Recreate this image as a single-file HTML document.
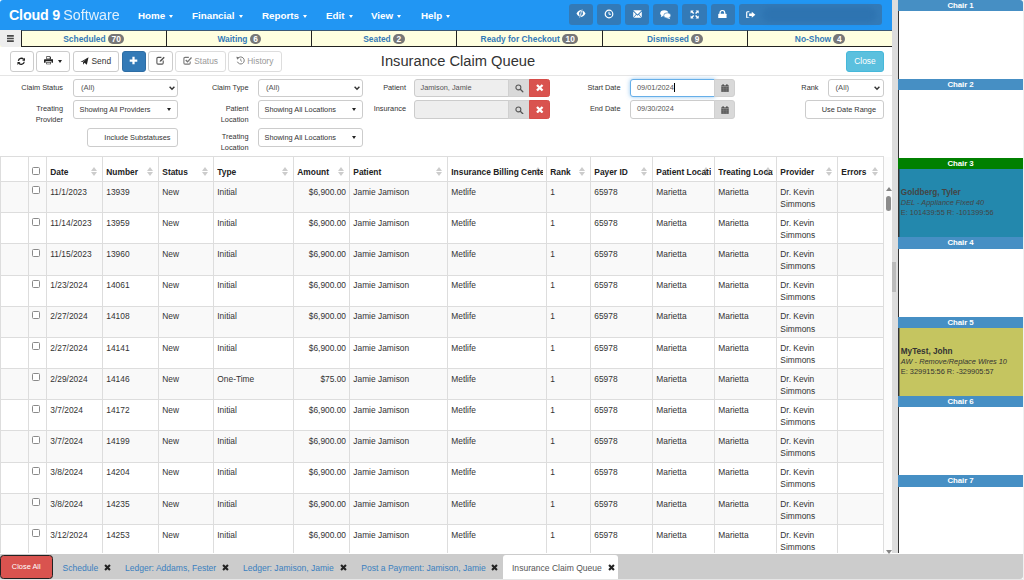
<!DOCTYPE html>
<html lang="en">
<head>
<meta charset="utf-8">
<title>Insurance Claim Queue</title>
<style>
*{box-sizing:border-box;}
html,body{margin:0;padding:0;}
body{width:1024px;height:580px;overflow:hidden;position:relative;background:#fff;font-family:"Liberation Sans",sans-serif;font-size:8.4px;color:#333;}
.abs{position:absolute;}
/* navbar */
#nav{position:absolute;left:0;top:0;width:892px;height:30px;background:#2196f3;border-top-left-radius:3px;}
#brand{position:absolute;left:9px;top:6.8px;font-size:14.3px;color:#fff;white-space:nowrap;letter-spacing:-0.2px;}
#brand b{font-weight:bold;}
#brand span{font-weight:normal;opacity:.86;letter-spacing:0px;margin-left:-0.5px;}
.menu{position:absolute;top:10.3px;font-size:9.8px;font-weight:bold;color:#fff;white-space:nowrap;}
.caret{display:inline-block;width:0;height:0;border-left:2.8px solid transparent;border-right:2.8px solid transparent;border-top:3.2px solid currentColor;vertical-align:middle;margin-left:1.5px;}
.nbtn{position:absolute;top:4px;height:21px;width:24.3px;background:#337ab7;border-radius:3px;}
/* status bar */
#sbar{position:absolute;left:0;top:30px;width:892px;height:17px;background:#ffffe0;}
.scell{position:absolute;top:0;height:17px;border-left:1px solid #222;border-bottom:1px solid #222;border-top:1px solid #3b5875;text-align:center;font-size:8.4px;font-weight:bold;color:#337ab7;line-height:16.5px;white-space:nowrap;}
.badge{display:inline-block;background:#777;color:#fff;border-radius:6px;font-size:8.4px;line-height:10px;padding:0 3.5px;height:10px;vertical-align:0.5px;font-weight:bold;}
#ham{position:absolute;left:0;top:0;width:20.6px;height:16.6px;background:#eee;border-radius:0 0 3px 3px;}
/* toolbar */
.btn{position:absolute;top:51px;height:21px;border:1px solid #ccc;border-radius:3px;background:#fff;color:#333;font-size:8.4px;line-height:19px;text-align:center;white-space:nowrap;}
.btn.dis{color:#999;border-color:#ddd;}
#title{position:absolute;left:0;width:916px;top:52px;text-align:center;font-size:14.7px;color:#333;line-height:18.6px;white-space:nowrap;}
#hr1{position:absolute;left:0;top:75px;width:892px;height:1px;background:#e5e5e5;}
/* filters */
.lbl{position:absolute;text-align:right;font-size:7.35px;line-height:11.6px;color:#333;white-space:nowrap;}
.sel{position:absolute;height:17.5px;border:1px solid #ccc;border-radius:3px;background:#fff;font-size:7.7px;line-height:15.5px;color:#555;padding-left:7px;white-space:nowrap;}
.dd{position:absolute;height:18.6px;border:1px solid #ccc;border-radius:3px;background:#fff;font-size:7.35px;line-height:17px;color:#333;padding-left:5.5px;white-space:nowrap;}
.inp{position:absolute;height:17.5px;border:1px solid #ccc;background:#eee;font-size:7.35px;line-height:15.5px;color:#555;padding-left:6px;white-space:nowrap;}
.addon{position:absolute;height:17.5px;background:#d9d9d9;border:1px solid #d0d0d0;}
.redb{position:absolute;height:17.5px;width:21px;background:#d9534f;border:1px solid #d64d49;border-radius:0 2.5px 2.5px 0;}
.ic{position:absolute;display:block;}
.chev{position:absolute;right:1.5px;top:4px;width:8px;height:8px;}
.dc{position:absolute;right:6.3px;top:7.2px;border-left-width:2.7px;border-right-width:2.7px;border-top-width:3.2px;margin:0;color:#222;}
/* table */
#tbl{position:absolute;left:0;top:156px;width:884px;height:397px;overflow:hidden;}
table{border-collapse:collapse;table-layout:fixed;width:883px;font-size:8.4px;}
td,th{border:1px solid #ddd;padding:0 0 0 3.3px;vertical-align:top;text-align:left;overflow:hidden;white-space:nowrap;}
th{height:25px;font-weight:bold;line-height:11px;padding-top:10px;border-bottom:1.6px solid #ddd;color:#222;position:relative;}
td{height:31.18px;line-height:12.1px;padding-top:3.8px;color:#333;}
th .t{overflow:hidden;margin-right:3px;position:relative;}
tr.odd td{background:#f9f9f9;}
td.wrap{white-space:normal;}
td.r{text-align:right;padding-right:3px;}
.cb{display:block;width:8px;height:8px;border:1px solid #8a8a8a;border-radius:1.5px;background:#fff;margin-top:0.6px;margin-left:-0.8px;}
th .cb{margin-top:-0.5px;}
.sort{position:absolute;right:5.2px;top:10.3px;width:6px;height:10px;}
.sort:before{content:"";position:absolute;left:0;top:0;border-left:3px solid transparent;border-right:3px solid transparent;border-bottom:4.3px solid #ccc;}
.sort:after{content:"";position:absolute;left:0;top:5.2px;border-left:3px solid transparent;border-right:3px solid transparent;border-top:4.3px solid #ccc;}
/* bottom tabs */
#tabs{position:absolute;left:0;top:554px;width:1023px;height:24.7px;background:#ccc;border-bottom-right-radius:3px;}
#botstrip{position:absolute;left:0;top:578.7px;width:1024px;height:1.3px;background:#e6e6e6;}
#rstrip{position:absolute;left:1023px;top:0;width:1px;height:580px;background:#f0f0f0;}
.tab{position:absolute;top:2.5px;height:22px;font-size:8.55px;line-height:22px;color:#3a80bf;white-space:nowrap;}
.tx{position:absolute;top:9.700px;width:7px;height:7px;}
#closeall{position:absolute;left:0;top:1px;width:52.5px;height:23.5px;background:#d9534f;border:1px solid #222;border-radius:3.500px;color:#fff;font-size:7.400px;line-height:21px;text-align:center;}
#acttab{position:absolute;left:502.5px;top:1px;width:115px;height:23.700px;background:#fff;border-radius:3px 3px 0 0;}
/* right panel */
#rp{position:absolute;left:892px;top:0;width:132px;height:553px;background:#fff;border-left:6px solid #ddd;}
#rpi{position:absolute;left:0;top:0;width:126px;height:553px;border-left:1px solid #333;background:#fff;}
.ch{position:absolute;left:-1px;width:125px;height:11.3px;background:#468fc4;color:#fff;font-weight:bold;font-size:7.9px;letter-spacing:-0.1px;line-height:11.3px;text-align:center;}
.cbody{position:absolute;left:-1px;width:125px;border-left:1px solid #333;box-shadow:inset 1px 0 0 rgba(51,51,51,.45);font-size:7.4px;line-height:10.5px;padding-left:1.8px;white-space:nowrap;}
.cbody b{font-size:8.2px;position:relative;top:0.6px;}
</style>
</head>
<body>

<div id="nav">
  <div id="brand"><b>Cloud 9</b> <span>Software</span></div>
  <div class="menu" style="left:138px">Home <span class="caret"></span></div>
  <div class="menu" style="left:192px">Financial <span class="caret"></span></div>
  <div class="menu" style="left:262px">Reports <span class="caret"></span></div>
  <div class="menu" style="left:326px">Edit <span class="caret"></span></div>
  <div class="menu" style="left:371px">View <span class="caret"></span></div>
  <div class="menu" style="left:421px">Help <span class="caret"></span></div>
  <div class="nbtn" style="left:569px"><svg class="ic" style="left:7px;top:5.2px;width:10px;height:9px" viewBox="0 0 20 18"><path d="M1 9 C4 3.5 8 2 10 2 C12 2 16 3.5 19 9 C16 14.5 12 16 10 16 C8 16 4 14.5 1 9 Z" fill="#fff"/><circle cx="10" cy="9" r="4" fill="#337ab7"/><circle cx="10" cy="9" r="1.8" fill="#fff"/><path d="M12.5 0.5 L7.5 17.5" stroke="#337ab7" stroke-width="3.4"/><path d="M12.2 1 L7.4 17.2" stroke="#fff" stroke-width="1.5"/></svg></div>
  <div class="nbtn" style="left:597px"><svg class="ic" style="left:6.6px;top:4.6px;width:10px;height:10px" viewBox="0 0 20 20"><circle cx="10" cy="10" r="7.6" fill="none" stroke="#fff" stroke-width="2.4"/><path d="M10 5.5 V10.5 H14" fill="none" stroke="#fff" stroke-width="2"/></svg></div>
  <div class="nbtn" style="left:625px"><svg class="ic" style="left:7.7px;top:5.8px;width:9px;height:8px" viewBox="0 0 20 16" preserveAspectRatio="none"><path d="M0.5 0.5 H19.5 L10 9 Z" fill="#fff"/><path d="M0.5 3 L6.5 8.3 L0.5 15 Z M19.5 3 L13.5 8.3 L19.5 15 Z" fill="#fff"/><path d="M1.5 15.5 L7.7 9.4 L10 11.4 L12.3 9.4 L18.5 15.5 Z" fill="#fff"/></svg></div>
  <div class="nbtn" style="left:653px;width:25.3px"><svg class="ic" style="left:7px;top:6px;width:11px;height:9.5px" viewBox="0 0 22 19"><ellipse cx="8.5" cy="6.5" rx="8" ry="6" fill="#fff"/><path d="M3 10 L1.5 14.5 L7 11.5 Z" fill="#fff"/><ellipse cx="14.5" cy="11" rx="7" ry="5.4" fill="#fff" stroke="#337ab7" stroke-width="1.3"/><path d="M18 14.5 L20.5 18.5 L14 16 Z" fill="#fff"/></svg></div>
  <div class="nbtn" style="left:682px;width:25px"><svg class="ic" style="left:8px;top:5.5px;width:9.3px;height:9px" viewBox="0 0 20 20"><g fill="#fff"><path d="M1 1 H8 L5.6 3.4 L9 6.8 L6.8 9 L3.4 5.6 L1 8 Z"/><path d="M19 1 V8 L16.6 5.6 L13.2 9 L11 6.8 L14.4 3.4 L12 1 Z"/><path d="M1 19 V12 L3.4 14.4 L6.8 11 L9 13.2 L5.6 16.6 L8 19 Z"/><path d="M19 19 H12 L14.4 16.600 L11 13.2 L13.2 11 L16.6 14.4 L19 12 Z"/></g></svg></div>
  <div class="nbtn" style="left:710.6px;width:24.4px"><svg class="ic" style="left:7.8px;top:5.7px;width:8.8px;height:8.8px" preserveAspectRatio="none" viewBox="0 0 18 20"><path d="M4.2 9 V6 A4.8 4.8 0 0 1 13.800 6 V9" fill="none" stroke="#fff" stroke-width="2.6"/><rect x="0.500" y="8.5" width="17" height="11" rx="1" fill="#fff"/></svg></div>
  <div class="nbtn" style="left:738.8px;width:143.4px"><svg class="ic" style="left:7.2px;top:6.6px;width:9.6px;height:7.6px" preserveAspectRatio="none" viewBox="0 0 20 18"><path d="M7 1.5 H3.500 A2 2 0 0 0 1.500 3.500 V14.500 A2 2 0 0 0 3.500 16.500 H7" fill="none" stroke="#fff" stroke-width="2.4"/><path d="M6.500 6 H12 V2 L19.500 9 L12 16 V12 H6.500 Z" fill="#fff"/></svg><div style="position:absolute;left:24px;top:3px;width:113px;height:15px;background:#2e74b1;border-radius:7px;filter:blur(2px)"></div></div>
</div>

<div id="sbar">
  <div id="ham"><svg class="ic" style="left:6.900px;top:5px;width:6.800px;height:7px" viewBox="0 0 14 13.4" preserveAspectRatio="none"><path d="M0 1.700 H14 M0 6.700 H14 M0 11.700 H14" stroke="#484848" stroke-width="3"/></svg></div>
  <div class="scell" style="left:20.6px;width:145.4px">Scheduled <span class="badge">70</span></div>
  <div class="scell" style="left:166px;width:146px">Waiting <span class="badge">6</span></div>
  <div class="scell" style="left:311px;width:145px">Seated <span class="badge">2</span></div>
  <div class="scell" style="left:456px;width:146px">Ready for Checkout <span class="badge">10</span></div>
  <div class="scell" style="left:602px;width:145px">Dismissed <span class="badge">9</span></div>
  <div class="scell" style="left:747px;width:145px">No-Show <span class="badge">4</span></div>
</div>

<div class="btn" style="left:9.5px;width:24px"><svg class="ic" style="left:6.4px;top:4.5px;width:8.6px;height:8.6px" viewBox="0 0 20 20"><path d="M3.2 9 A7 7 0 0 1 15.5 5.500" fill="none" stroke="#222" stroke-width="3"/><path d="M19 1.500 V8.500 H12 Z" fill="#222"/><path d="M16.800 11 A7 7 0 0 1 4.500 14.500" fill="none" stroke="#222" stroke-width="3"/><path d="M1 18.500 V11.500 H8 Z" fill="#222"/></svg></div>
<div class="btn" style="left:36.3px;width:33.7px"><svg class="ic" style="left:6.8px;top:4.3px;width:9.2px;height:8.5px" viewBox="0 0 20 19" preserveAspectRatio="none"><path d="M5 0.500 H13 L15 2.500 V7 H5 Z" fill="#222"/><path d="M1.500 7 H18.500 A1.500 1.500 0 0 1 20 8.500 V15 H16.500 V12 H3.500 V15 H0 V8.500 A1.500 1.500 0 0 1 1.500 7 Z" fill="#222"/><path d="M5 13.500 H15 V18.500 H5 Z" fill="#222"/><path d="M6.200 2 H12.500 V5.800 H6.200 Z" fill="#fff"/><path d="M6.300 14.800 H13.700 V17.300 H6.300 Z" fill="#fff"/></svg><span class="caret" style="position:absolute;left:20.3px;top:7.9px;margin:0;color:#222"></span></div>
<div class="btn" style="left:73px;width:45.6px;text-align:left;padding-left:17.5px"><svg class="ic" style="left:5.8px;top:4.5px;width:9px;height:8.500px" viewBox="0 0 20 20"><path d="M0.500 11.500 L19.500 0.500 L15.500 18 L10 13.500 L7 18.500 L6.500 12 L15 4.500 L5 11.500 Z" fill="#222"/></svg>Send</div>
<div class="btn" style="left:121.6px;width:24.4px;background:#337ab7;border-color:#2e6da4;color:#fff;"><svg class="ic" style="left:6.500px;top:4.3px;width:9px;height:9px" viewBox="0 0 10 10"><path d="M5 0.800 V9.200 M0.800 5 H9.200" stroke="#fff" stroke-width="2.500"/></svg></div>
<div class="btn" style="left:148.4px;width:24.2px"><svg class="ic" style="left:6.6px;top:4.3px;width:9px;height:9px" viewBox="0 0 20 20"><path d="M12 3 H4.500 A2.500 2.500 0 0 0 2 5.500 V15.500 A2.500 2.500 0 0 0 4.500 18 H13.500 A2.500 2.500 0 0 0 16 15.500 V10" fill="none" stroke="#555" stroke-width="2.400"/><path d="M8 13 L8.800 9.800 L17 1.500 L19.500 4 L11.200 12.200 Z" fill="#555"/></svg></div>
<div class="btn dis" style="left:175.4px;width:50.400px;text-align:left;padding-left:17.900px"><svg class="ic" style="left:6.400px;top:4.400px;width:9px;height:9px" viewBox="0 0 20 20"><path d="M13 3 H4.500 A2.500 2.500 0 0 0 2 5.500 V15.500 A2.500 2.500 0 0 0 4.500 18 H13.500 A2.500 2.500 0 0 0 16 15.500 V12" fill="none" stroke="#777" stroke-width="2.400"/><path d="M6 9 L10 13 L19 3.500" fill="none" stroke="#777" stroke-width="3"/></svg>Status</div>
<div class="btn dis" style="left:228.400px;width:53.500px;text-align:left;padding-left:17.900px"><svg class="ic" style="left:6.5px;top:4.4px;width:9px;height:8.800px" viewBox="0 0 20 20"><path d="M4 5.500 A8 8 0 1 1 3 13" fill="none" stroke="#777" stroke-width="2.200"/><path d="M0.500 1.500 L7.500 3 L2.500 8.500 Z" fill="#777"/><path d="M10.500 6 V10.500 L13.500 12.500" fill="none" stroke="#777" stroke-width="1.800"/></svg>History</div>
<div id="title">Insurance Claim Queue</div>
<div class="btn" style="left:846px;width:38px;background:#5bc0de;border-color:#46b8da;color:#fff;">Close</div>
<div id="hr1"></div>


<!-- filters -->
<div class="lbl" style="left:0;width:63px;top:81.6px">Claim Status</div>
<div class="sel" style="left:73px;top:79px;width:105px">(All)<svg class="chev" viewBox="0 0 10 10"><path d="M2 3.5 L5 6.5 L8 3.5" fill="none" stroke="#333" stroke-width="1.8"/></svg></div>
<div class="lbl" style="left:0;width:63px;top:102.6px">Treating<br>Provider</div>
<div class="dd" style="left:73px;top:100.2px;width:105px">Showing All Providers<span class="caret dc"></span></div>
<div class="dd" style="left:87px;top:128.2px;width:91px;text-align:right;padding-right:6.5px">Include Substatuses</div>

<div class="lbl" style="left:190px;width:58.5px;top:81.6px">Claim Type</div>
<div class="sel" style="left:258px;top:79px;width:105px">(All)<svg class="chev" viewBox="0 0 10 10"><path d="M2 3.5 L5 6.5 L8 3.5" fill="none" stroke="#333" stroke-width="1.8"/></svg></div>
<div class="lbl" style="left:190px;width:58.5px;top:102.6px">Patient<br>Location</div>
<div class="dd" style="left:258px;top:100.2px;width:105px">Showing All Locations<span class="caret dc"></span></div>
<div class="lbl" style="left:190px;width:58.5px;top:130.9px">Treating<br>Location</div>
<div class="dd" style="left:258px;top:128.2px;width:105px">Showing All Locations<span class="caret dc"></span></div>

<div class="lbl" style="left:360px;width:46px;top:81.6px">Patient</div>
<div class="inp" style="left:413.5px;top:79px;width:95px;border-radius:3px 0 0 3px">Jamison, Jamie</div>
<div class="addon" style="left:508px;top:79px;width:21.5px"><svg class="ic" style="left:6px;top:4px;width:8.5px;height:8.5px" viewBox="0 0 10 10"><circle cx="4" cy="4" r="2.9" fill="none" stroke="#555" stroke-width="1.3"/><path d="M6.2 6.2 L9.2 9.2" stroke="#555" stroke-width="1.500" stroke-linecap="round"/></svg></div>
<div class="redb" style="left:529px;top:79px"><svg class="ic" style="left:6px;top:4.2px;width:7.5px;height:7.5px" viewBox="0 0 10 10"><path d="M1.300 1.300 L8.700 8.700 M8.700 1.300 L1.300 8.700" stroke="#fff" stroke-width="3.100" stroke-linecap="butt"/></svg></div>
<div class="lbl" style="left:360px;width:46px;top:103.1px">Insurance</div>
<div class="inp" style="left:413.5px;top:100.2px;width:95px;height:18.6px;border-radius:3px 0 0 3px"></div>
<div class="addon" style="left:508px;top:100.2px;width:21.5px;height:18.6px"><svg class="ic" style="left:6px;top:4.5px;width:8.5px;height:8.5px" viewBox="0 0 10 10"><circle cx="4" cy="4" r="2.9" fill="none" stroke="#555" stroke-width="1.3"/><path d="M6.2 6.2 L9.2 9.2" stroke="#555" stroke-width="1.500" stroke-linecap="round"/></svg></div>
<div class="redb" style="left:529px;top:100.2px;height:18.6px"><svg class="ic" style="left:6px;top:4.7px;width:7.5px;height:7.5px" viewBox="0 0 10 10"><path d="M1.300 1.300 L8.700 8.700 M8.700 1.300 L1.300 8.700" stroke="#fff" stroke-width="3.100" stroke-linecap="butt"/></svg></div>

<div class="lbl" style="left:560px;width:60.5px;top:81.6px">Start Date</div>
<div class="inp" style="left:630px;top:79px;width:84.5px;background:#fff;border-color:#66afe9;border-radius:3px 0 0 3px;box-shadow:0 0 4px rgba(102,175,233,.7)">09/01/2024<span style="display:inline-block;width:1px;height:9px;background:#000;vertical-align:-1.5px"></span></div>
<div class="addon" style="left:714px;top:79px;width:20.5px;border-radius:0 3px 3px 0"><svg class="ic" style="left:5.5px;top:4px;width:8px;height:8px" viewBox="0 0 10 10"><path d="M0.3 1.6 H9.7 V9.8 H0.3 Z" fill="#555"/><path d="M2.6 0.2 V2.4 M7.4 0.200 V2.4" stroke="#444" stroke-width="1.6"/><path d="M0.3 3.3 H9.7" stroke="#ddd" stroke-width=".5"/><path d="M0.3 5.500 H9.7 M0.3 7.600 H9.7 M3.4 3.300 V9.800 M6.600 3.300 V9.800" stroke="#999" stroke-width=".4"/></svg></div>
<div class="lbl" style="left:560px;width:60.5px;top:103.1px">End Date</div>
<div class="inp" style="left:630px;top:100.2px;width:84.5px;height:18.6px;background:#fff;border-radius:3px 0 0 3px">09/30/2024</div>
<div class="addon" style="left:714px;top:100.2px;width:20.5px;height:18.6px;border-radius:0 3px 3px 0"><svg class="ic" style="left:5.5px;top:4.5px;width:8px;height:8px" viewBox="0 0 10 10"><path d="M0.3 1.6 H9.7 V9.8 H0.3 Z" fill="#555"/><path d="M2.6 0.2 V2.4 M7.4 0.200 V2.4" stroke="#444" stroke-width="1.6"/><path d="M0.3 3.3 H9.7" stroke="#ddd" stroke-width=".5"/><path d="M0.3 5.500 H9.7 M0.3 7.600 H9.7 M3.4 3.300 V9.800 M6.600 3.300 V9.800" stroke="#999" stroke-width=".4"/></svg></div>

<div class="lbl" style="left:770px;width:48.5px;top:81.6px">Rank</div>
<div class="sel" style="left:827.5px;top:79px;width:56px">(All)<svg class="chev" viewBox="0 0 10 10"><path d="M2 3.5 L5 6.5 L8 3.5" fill="none" stroke="#333" stroke-width="1.8"/></svg></div>
<div class="dd" style="left:805px;top:100.2px;width:78.5px;text-align:right;padding-right:6.5px">Use Date Range</div>

<div id="tbl"><table>
<colgroup><col style="width:28px"><col style="width:18px"><col style="width:56px"><col style="width:56px"><col style="width:55px"><col style="width:80px"><col style="width:56px"><col style="width:98px"><col style="width:99px"><col style="width:44px"><col style="width:62px"><col style="width:62px"><col style="width:62px"><col style="width:61px"><col style="width:46px"></colgroup>
<thead><tr>
<th></th>
<th><span class="cb"></span></th>
<th><span class="sort"></span><div class="t">Date</div></th>
<th><span class="sort"></span><div class="t">Number</div></th>
<th><span class="sort"></span><div class="t">Status</div></th>
<th><span class="sort"></span><div class="t">Type</div></th>
<th><span class="sort"></span><div class="t">Amount</div></th>
<th><span class="sort"></span><div class="t">Patient</div></th>
<th><span class="sort"></span><div class="t">Insurance Billing Center</div></th>
<th><span class="sort"></span><div class="t">Rank</div></th>
<th><span class="sort"></span><div class="t">Payer ID</div></th>
<th><span class="sort"></span><div class="t">Patient Location</div></th>
<th><span class="sort"></span><div class="t">Treating Location</div></th>
<th><span class="sort"></span><div class="t">Provider</div></th>
<th><span class="sort"></span><div class="t">Errors</div></th>
</tr></thead><tbody>
<tr class="odd"><td></td><td><span class="cb"></span></td><td>11/1/2023</td><td>13939</td><td>New</td><td>Initial</td><td class="r">$6,900.00</td><td>Jamie Jamison</td><td>Metlife</td><td>1</td><td>65978</td><td>Marietta</td><td>Marietta</td><td class="wrap">Dr. Kevin Simmons</td><td></td></tr>
<tr class="even"><td></td><td><span class="cb"></span></td><td>11/14/2023</td><td>13959</td><td>New</td><td>Initial</td><td class="r">$6,900.00</td><td>Jamie Jamison</td><td>Metlife</td><td>1</td><td>65978</td><td>Marietta</td><td>Marietta</td><td class="wrap">Dr. Kevin Simmons</td><td></td></tr>
<tr class="odd"><td></td><td><span class="cb"></span></td><td>11/15/2023</td><td>13960</td><td>New</td><td>Initial</td><td class="r">$6,900.00</td><td>Jamie Jamison</td><td>Metlife</td><td>1</td><td>65978</td><td>Marietta</td><td>Marietta</td><td class="wrap">Dr. Kevin Simmons</td><td></td></tr>
<tr class="even"><td></td><td><span class="cb"></span></td><td>1/23/2024</td><td>14061</td><td>New</td><td>Initial</td><td class="r">$6,900.00</td><td>Jamie Jamison</td><td>Metlife</td><td>1</td><td>65978</td><td>Marietta</td><td>Marietta</td><td class="wrap">Dr. Kevin Simmons</td><td></td></tr>
<tr class="odd"><td></td><td><span class="cb"></span></td><td>2/27/2024</td><td>14108</td><td>New</td><td>Initial</td><td class="r">$6,900.00</td><td>Jamie Jamison</td><td>Metlife</td><td>1</td><td>65978</td><td>Marietta</td><td>Marietta</td><td class="wrap">Dr. Kevin Simmons</td><td></td></tr>
<tr class="even"><td></td><td><span class="cb"></span></td><td>2/27/2024</td><td>14141</td><td>New</td><td>Initial</td><td class="r">$6,900.00</td><td>Jamie Jamison</td><td>Metlife</td><td>1</td><td>65978</td><td>Marietta</td><td>Marietta</td><td class="wrap">Dr. Kevin Simmons</td><td></td></tr>
<tr class="odd"><td></td><td><span class="cb"></span></td><td>2/29/2024</td><td>14146</td><td>New</td><td>One-Time</td><td class="r">$75.00</td><td>Jamie Jamison</td><td>Metlife</td><td>1</td><td>65978</td><td>Marietta</td><td>Marietta</td><td class="wrap">Dr. Kevin Simmons</td><td></td></tr>
<tr class="even"><td></td><td><span class="cb"></span></td><td>3/7/2024</td><td>14172</td><td>New</td><td>Initial</td><td class="r">$6,900.00</td><td>Jamie Jamison</td><td>Metlife</td><td>1</td><td>65978</td><td>Marietta</td><td>Marietta</td><td class="wrap">Dr. Kevin Simmons</td><td></td></tr>
<tr class="odd"><td></td><td><span class="cb"></span></td><td>3/7/2024</td><td>14199</td><td>New</td><td>Initial</td><td class="r">$6,900.00</td><td>Jamie Jamison</td><td>Metlife</td><td>1</td><td>65978</td><td>Marietta</td><td>Marietta</td><td class="wrap">Dr. Kevin Simmons</td><td></td></tr>
<tr class="even"><td></td><td><span class="cb"></span></td><td>3/8/2024</td><td>14204</td><td>New</td><td>Initial</td><td class="r">$6,900.00</td><td>Jamie Jamison</td><td>Metlife</td><td>1</td><td>65978</td><td>Marietta</td><td>Marietta</td><td class="wrap">Dr. Kevin Simmons</td><td></td></tr>
<tr class="odd"><td></td><td><span class="cb"></span></td><td>3/8/2024</td><td>14235</td><td>New</td><td>Initial</td><td class="r">$6,900.00</td><td>Jamie Jamison</td><td>Metlife</td><td>1</td><td>65978</td><td>Marietta</td><td>Marietta</td><td class="wrap">Dr. Kevin Simmons</td><td></td></tr>
<tr class="even"><td></td><td><span class="cb"></span></td><td>3/12/2024</td><td>14253</td><td>New</td><td>Initial</td><td class="r">$6,900.00</td><td>Jamie Jamison</td><td>Metlife</td><td>1</td><td>65978</td><td>Marietta</td><td>Marietta</td><td class="wrap">Dr. Kevin Simmons</td><td></td></tr>
<tr class="odd"><td></td><td><span class="cb"></span></td><td>3/12/2024</td><td>14266</td><td>New</td><td>Initial</td><td class="r">$6,900.00</td><td>Jamie Jamison</td><td>Metlife</td><td>1</td><td>65978</td><td>Marietta</td><td>Marietta</td><td class="wrap">Dr. Kevin Simmons</td><td></td></tr>
</tbody></table></div>


<!-- table scrollbar -->
<div style="position:absolute;left:884px;top:157px;width:8px;height:397px;background:#fcfcfc"></div>
<div style="position:absolute;left:885.8px;top:187px;width:0;height:0;border-left:3.1px solid transparent;border-right:3.1px solid transparent;border-bottom:4.2px solid #858585"></div>
<div style="position:absolute;left:886.2px;top:196.2px;width:5.2px;height:15px;border-radius:2.6px;background:#8c8c8c"></div>
<div style="position:absolute;left:885.8px;top:550px;width:0;height:0;border-left:3.1px solid transparent;border-right:3.1px solid transparent;border-top:4.2px solid #858585"></div>

<div id="tabs">
  <div id="closeall">Close All</div>
  <div class="tab" style="left:62.5px">Schedule</div><svg class="tx" style="left:104.2px" viewBox="0 0 10 10"><path d="M1.500 1.500 L8.500 8.500 M8.500 1.500 L1.500 8.500" stroke="#222" stroke-width="3" stroke-linecap="butt"/></svg>
  <div class="tab" style="left:125px">Ledger: Addams, Fester</div><svg class="tx" style="left:221.9px" viewBox="0 0 10 10"><path d="M1.500 1.500 L8.500 8.500 M8.500 1.500 L1.500 8.500" stroke="#222" stroke-width="3" stroke-linecap="butt"/></svg>
  <div class="tab" style="left:243px">Ledger: Jamison, Jamie</div><svg class="tx" style="left:340px" viewBox="0 0 10 10"><path d="M1.500 1.500 L8.500 8.500 M8.500 1.500 L1.500 8.500" stroke="#222" stroke-width="3" stroke-linecap="butt"/></svg>
  <div class="tab" style="left:361.3px">Post a Payment: Jamison, Jamie</div><svg class="tx" style="left:491.3px" viewBox="0 0 10 10"><path d="M1.500 1.500 L8.500 8.500 M8.500 1.500 L1.500 8.500" stroke="#222" stroke-width="3" stroke-linecap="butt"/></svg>
  <div id="acttab"></div>
  <div class="tab" style="left:512px;color:#555">Insurance Claim Queue</div><svg class="tx" style="left:608px" viewBox="0 0 10 10"><path d="M1.500 1.500 L8.500 8.500 M8.500 1.500 L1.500 8.500" stroke="#222" stroke-width="3" stroke-linecap="butt"/></svg>
</div>

<div id="rp"><div style="position:absolute;left:-5.6px;top:261.7px;width:3.2px;height:30px;background:#bbb"></div><div id="rpi">
  <div class="ch" style="top:-0.5px;border-radius:0 3px 0 0">Chair 1</div>
  <div class="ch" style="top:78.8px">Chair 2</div>
  <div class="ch" style="top:158.1px;background:#008000">Chair 3</div>
  <div class="ch" style="top:237.4px">Chair 4</div>
  <div class="ch" style="top:316.7px">Chair 5</div>
  <div class="ch" style="top:396px">Chair 6</div>
  <div class="ch" style="top:475.3px">Chair 7</div>
  <div class="cbody" style="top:169.4px;height:68px;background:#2388ad;color:#444;padding-top:18px"><b>Goldberg, Tyler</b><br><i>DEL - Appliance Fixed 40</i><br>E: 101439:55 R: -101399:56</div>
  <div class="cbody" style="top:328px;height:68px;background:#c5c560;color:#333;padding-top:18px"><b>MyTest, John</b><br><i>AW - Remove/Replace Wires 10</i><br>E: 329915:56 R: -329905:57</div>
</div></div>

<div id="botstrip"></div><div id="rstrip"></div>
</body>
</html>
